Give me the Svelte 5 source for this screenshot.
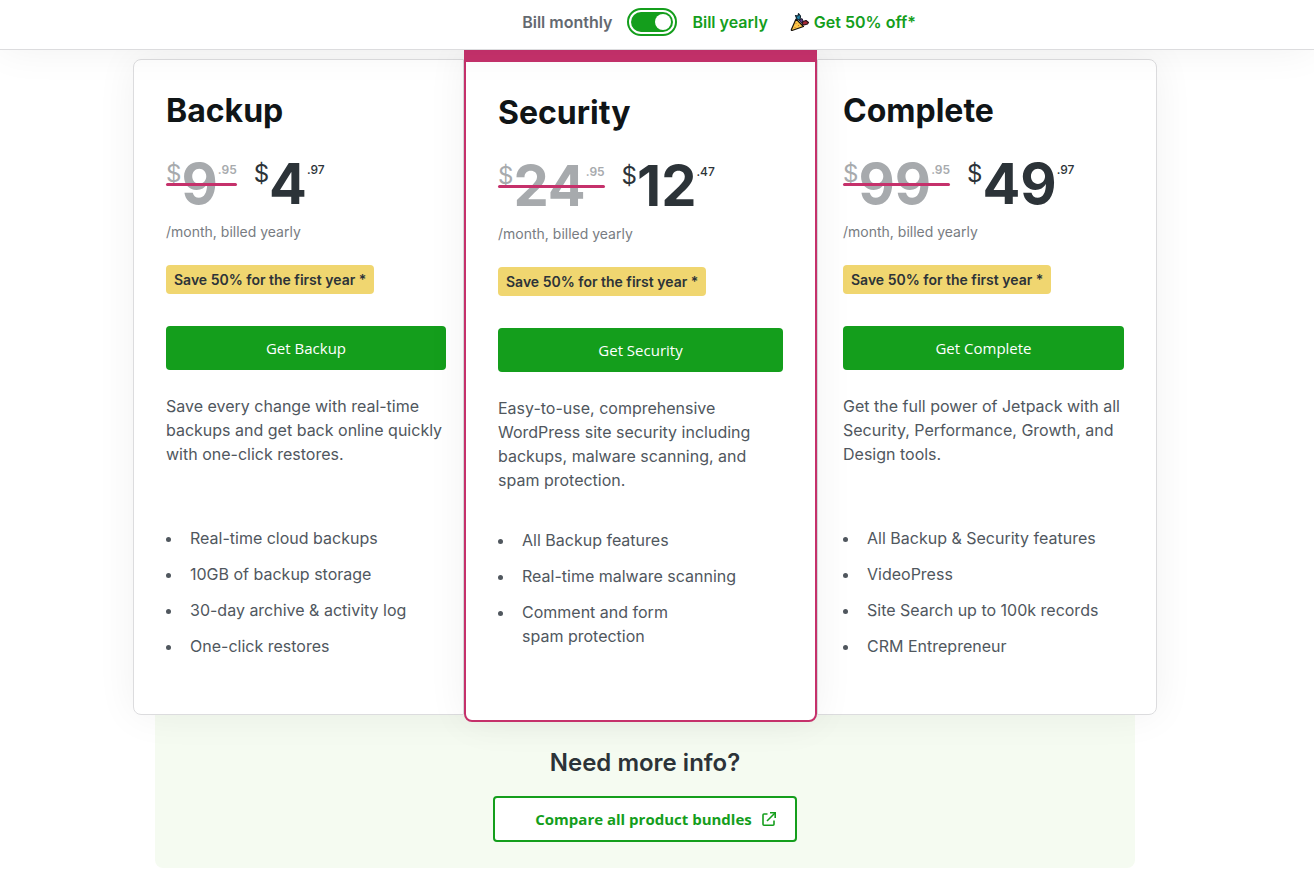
<script lang="ts">
	interface Price {
		whole: string;
		cents: string;
	}

	interface Plan {
		slug: string;
		name: string;
		featured?: boolean;
		full: Price;
		discounted: Price;
		description: string;
		features: string[];
	}

	const plans: Plan[] = [
		{
			slug: 'backup',
			name: 'Backup',
			full: { whole: '9', cents: '95' },
			discounted: { whole: '4', cents: '97' },
			description:
				'Save every change with real-time backups and get back online quickly with one-click restores.',
			features: [
				'Real-time cloud backups',
				'10GB of backup storage',
				'30-day archive & activity log',
				'One-click restores'
			]
		},
		{
			slug: 'security',
			name: 'Security',
			featured: true,
			full: { whole: '24', cents: '95' },
			discounted: { whole: '12', cents: '47' },
			description:
				'Easy-to-use, comprehensive WordPress site security including backups, malware scanning, and spam protection.',
			features: [
				'All Backup features',
				'Real-time malware scanning',
				'Comment and form spam\u00a0protection'
			]
		},
		{
			slug: 'complete',
			name: 'Complete',
			full: { whole: '99', cents: '95' },
			discounted: { whole: '49', cents: '97' },
			description:
				'Get the full power of Jetpack with all Security, Performance, Growth, and Design tools.',
			features: [
				'All Backup & Security features',
				'VideoPress',
				'Site Search up to 100k records',
				'CRM Entrepreneur'
			]
		}
	];

	let yearly = $state(true);
</script>

{#snippet amount(price: Price)}
	<span class="currency">$</span><span class="whole">{price.whole}</span><span class="cents"
		>.{price.cents}</span
	>
{/snippet}

<div class="page">
	<header class="billing">
		<div class="billing-switch">
			<label for="billing-toggle" class="monthly" class:active={!yearly}>Bill monthly</label>
			<input id="billing-toggle" type="checkbox" role="switch" bind:checked={yearly} />
			<label for="billing-toggle" class="yearly">Bill yearly</label>
		</div>
		<div class="promo">
			<svg width="20" height="20" viewBox="0 0 20 20" aria-hidden="true">
				<path d="M6 7 L13.5 14.5 L2 18.5 Q1 18.5 1.4 17.4 Z" fill="#fbc546" stroke="#17120c" stroke-width="1.2" stroke-linejoin="round" />
				<path d="M7 7 L5.5 3.5 L8 4 L8.5 1.5 L10.5 4 L10 8.5 Z" fill="#2287ad" stroke="#14242e" stroke-width="1.2" stroke-linejoin="round" />
				<path d="M12 12 L13 9.5 L16 8.5 L18.5 10.5 L17.5 12 L14 13 Z" fill="#a82835" stroke="#271016" stroke-width="1.2" stroke-linejoin="round" />
				<path d="M9.5 8.5 L12 6.5 L13 9 L11.5 11 Z" fill="#5b3d93" stroke="#1c1528" />
				<path d="M5.5 11.5h1M8 13.5h1M4.5 15.5h1" stroke="#cf6e2c" stroke-width="1.2" />
			</svg>
			<span>Get 50% off*</span>
		</div>
	</header>

	<main>
		<div class="plans">
			{#each plans as plan (plan.slug)}
				<section class="plan {plan.slug}" class:featured={plan.featured}>
					<h2>{plan.name}</h2>
					<div class="prices">
						<del class="price full">{@render amount(plan.full)}</del>
						<span class="price">{@render amount(plan.discounted)}</span>
					</div>
					<p class="period">/month, billed yearly</p>
					<span class="saving">Save 50% for the first year *</span>
					<a class="buy" href="#{plan.slug}">Get {plan.name}</a>
					<p class="description">{plan.description}</p>
					<ul>
						{#each plan.features as feature}
							<li><span>{feature}</span></li>
						{/each}
					</ul>
				</section>
			{/each}
		</div>

		<section class="more-info">
			<h3>Need more info?</h3>
			<a class="compare" href="#compare">
				<span>Compare all product bundles</span>
				<svg width="16" height="16" viewBox="0 0 16 16" fill="none" stroke="currentColor" stroke-width="1.6" aria-hidden="true">
					<path d="M6.5 3H3Q2 3 2 4V13.2Q2 14.2 3 14.2H12Q13 14.2 13 13.2V9.5" />
					<path d="M6 10L14 2" />
					<path d="M9 1.8H14.2V7" />
				</svg>
			</a>
		</section>
	</main>
</div>

<style>
	:global(body) {
		margin: 0;
		background: #fff;
	}

	.page {
		--green: #149e1c;
		--pink: #c5316b;
		--ink: #2c3338;
		--shadow: 0 0 40px rgba(0, 0, 0, 0.06);
		font-family: Inter, 'Liberation Sans', sans-serif;
		font-size: 16px;
		line-height: 24px;
		color: #50575e;
	}

	h2,
	h3,
	p,
	ul {
		margin: 0;
		padding: 0;
	}

	.billing {
		position: relative;
		z-index: 3;
		display: grid;
		grid-template-columns: 1fr auto 1fr;
		align-items: center;
		box-sizing: border-box;
		height: 50px;
		padding: 0 24px 5px 0;
		background: #fff;
		border-bottom: 1px solid #dcdcde;
		box-shadow: var(--shadow);
		font-weight: 600;
	}

	.billing-switch {
		grid-column: 2;
		display: flex;
		align-items: center;
		gap: 15px;
	}

	.monthly {
		color: #646970;
	}

	.monthly.active,
	.yearly,
	.promo {
		color: var(--green);
	}

	.promo {
		display: flex;
		align-items: center;
		gap: 4px;
		margin-left: 22px;
	}

	#billing-toggle {
		appearance: none;
		display: flex;
		align-items: center;
		box-sizing: border-box;
		width: 50px;
		height: 28px;
		margin: 0;
		padding: 2px;
		border: 2px solid var(--green);
		border-radius: 14px;
		background: var(--green) content-box;
		cursor: pointer;
	}

	#billing-toggle::before {
		content: '';
		width: 16px;
		height: 16px;
		margin: 0 2px;
		border-radius: 50%;
		background: #fff;
	}

	#billing-toggle:checked {
		justify-content: flex-end;
	}

	main {
		padding: 9px 24px 5px 0;
	}

	.plans {
		position: relative;
		z-index: 1;
		display: grid;
		grid-template-columns: 331fr 353fr 340fr;
		max-width: 1024px;
		margin: 0 auto;
		border-radius: 8px;
		box-shadow: var(--shadow);
	}

	.plan {
		display: flex;
		flex-direction: column;
		align-items: flex-start;
		padding: 32px 32px 56px;
		background: #fff;
		border: 1px solid #dcdcde;
	}

	.backup {
		padding-right: 17px;
		border-radius: 8px 0 0 8px;
	}

	.complete {
		padding-left: 25px;
		border-radius: 0 8px 8px 0;
	}

	.featured {
		z-index: 1;
		margin: -9px 0 -7px;
		border: 2px solid var(--pink);
		border-top-width: 12px;
		border-radius: 0 0 8px 8px;
		box-shadow: var(--shadow);
	}

	h2 {
		margin-bottom: 24px;
		font-size: 32px;
		font-weight: 700;
		line-height: 38px;
		color: #101517;
	}

	.prices {
		display: flex;
		gap: 17px;
		margin-bottom: 7px;
	}

	.price {
		position: relative;
		display: flex;
		align-items: flex-start;
		color: var(--ink);
		text-decoration: none;
	}

	.full {
		color: #a7aaad;
	}

	.full::after {
		content: '';
		position: absolute;
		top: 29px;
		left: 0;
		right: 0;
		height: 3px;
		border-radius: 2px;
		background: var(--pink);
	}

	.currency {
		font-size: 24px;
		font-weight: 400;
		line-height: 40px;
	}

	.whole {
		font-size: 56px;
		font-weight: 700;
		line-height: 60px;
	}

	.cents {
		font-size: 12px;
		font-weight: 500;
		line-height: 32px;
	}

	.full .cents {
		font-weight: 600;
	}

	.period {
		margin-bottom: 23px;
		font-size: 14px;
		line-height: 21px;
		color: #787c82;
	}

	.saving {
		padding: 4px 8px;
		border-radius: 4px;
		background: #f0d670;
		font-size: 14px;
		font-weight: 600;
		line-height: 21px;
		color: var(--ink);
	}

	.buy {
		align-self: stretch;
		margin: 32px 0 24px;
		border-radius: 4px;
		background: var(--green);
		font-family: 'Open Sans', 'Noto Sans', sans-serif;
		font-size: 15px;
		line-height: 44px;
		text-align: center;
		text-decoration: none;
		color: #fff;
	}

	.description {
		min-height: 96px;
		margin-bottom: 36px;
	}

	ul {
		display: flex;
		flex-direction: column;
		gap: 12px;
		list-style: none;
	}

	li {
		display: flex;
		gap: 19px;
	}

	.featured ul {
		max-width: 240px;
	}

	li::before {
		content: '';
		flex: none;
		width: 5px;
		height: 5px;
		margin-top: 11px;
		border-radius: 50%;
		background: #50575e;
	}

	.more-info {
		display: flex;
		flex-direction: column;
		align-items: center;
		max-width: 980px;
		margin: 0 auto;
		padding: 31px 0 26px;
		border-radius: 0 0 8px 8px;
		background: #f5fbf1;
	}

	h3 {
		margin-bottom: 16px;
		font-size: 24px;
		font-weight: 600;
		line-height: 34px;
		color: var(--ink);
	}

	.compare {
		display: flex;
		align-items: center;
		gap: 9px;
		padding: 0 18px 0 40px;
		border: 2px solid var(--green);
		border-radius: 4px;
		background: #fff;
		font-family: 'Open Sans', 'Noto Sans', sans-serif;
		font-size: 15px;
		font-weight: 700;
		line-height: 42px;
		text-decoration: none;
		color: var(--green);
	}

	@media (max-width: 900px) {
		.plans {
			grid-template-columns: 1fr;
		}

		.featured {
			margin: 0;
		}
	}
</style>
